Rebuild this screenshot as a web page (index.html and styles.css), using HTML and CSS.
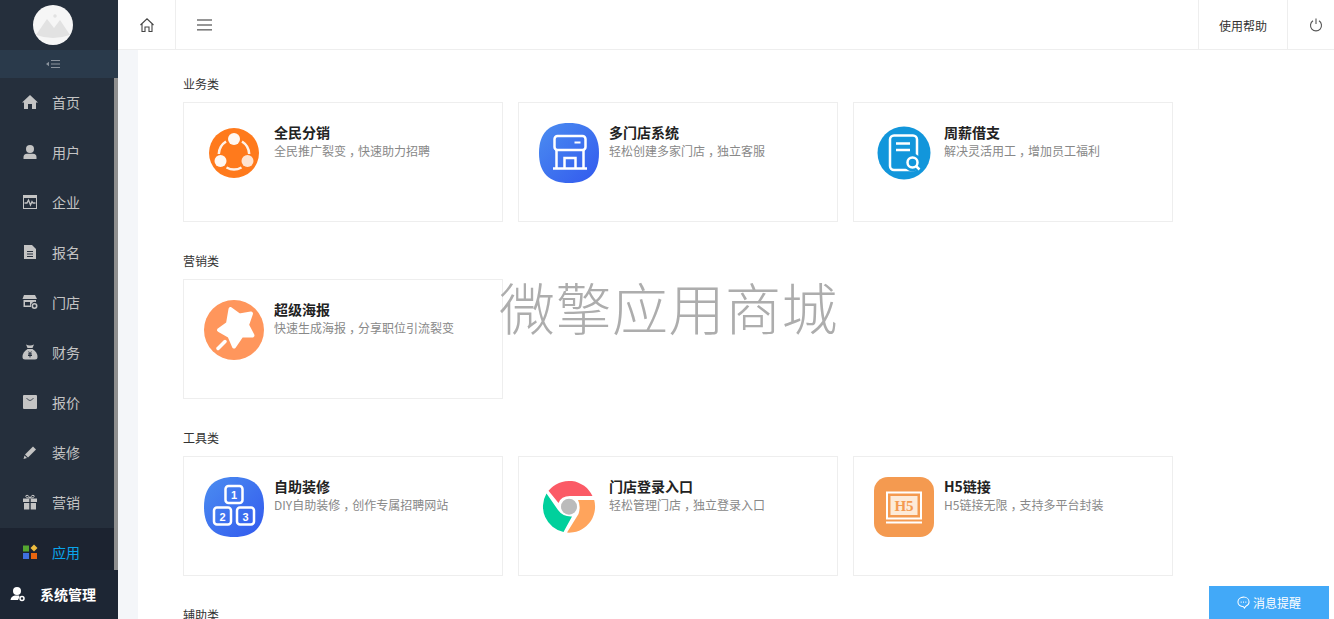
FILE: index.html
```html
<!DOCTYPE html>
<html lang="zh-CN">
<head>
    <meta charset="UTF-8">
    <title>应用</title>
    <link rel="stylesheet" href="styles.css">
</head>
<body>
    <!-- Sidebar -->
    <aside class="sidebar">
        <div class="logo">
            <svg width="40" height="40" viewBox="0 0 40 40">
                <circle cx="20" cy="20" r="20" fill="#f6f6f6"/>
                <path d="M3 30 L14 14 L21 23 L27 15 L37 30 Q20 36 3 30Z" fill="#e2e2e2"/>
                <circle cx="22" cy="11" r="1.8" fill="#e2e2e2"/>
            </svg>
        </div>
        <div class="toggle">
            <svg width="14" height="10" viewBox="0 0 14 10" fill="#8b939d">
                <path d="M0 5 L3 2.8 V7.2Z"/>
                <rect x="5" y="1" width="9" height="1"/><rect x="5" y="4.500" width="9" height="1"/><rect x="5" y="8" width="9" height="1"/>
            </svg>
        </div>
        <nav class="menu">
            <a class="menu-item">
                <svg class="menu-icon" viewBox="0 0 16 16"><path d="M8 1 L16 8.500 H14 V15 H10 V10 H6 V15 H2 V8.500 H0Z"/></svg>
                <span>首页</span>
            </a>
            <a class="menu-item">
                <svg class="menu-icon" viewBox="0 0 16 16"><circle cx="8" cy="5" r="4"/><path d="M1.500 15 V13 Q1.500 10 5 9.700 H11 Q14.500 10 14.500 13 V15Z"/></svg>
                <span>用户</span>
            </a>
            <a class="menu-item">
                <svg class="menu-icon" viewBox="0 0 16 16"><path fill-rule="evenodd" d="M1 1 H15 V15 H1Z M2 4 V14 H14 V4Z"/><path d="M2.500 9 L5 9 L6.500 6 L8.500 11 L10 7.500 L11 9 L13.500 9" fill="none" stroke="#c4c4c4" stroke-width="1.300"/></svg>
                <span>企业</span>
            </a>
            <a class="menu-item">
                <svg class="menu-icon" viewBox="0 0 16 16"><path fill-rule="evenodd" d="M2 1 H10 L14 5 V15 H2Z M5 7 V8 H11 V7Z M5 9.500 V10.500 H11 V9.500Z M5 12 V13 H11 V12Z"/></svg>
                <span>报名</span>
            </a>
            <a class="menu-item">
                <svg class="menu-icon" viewBox="0 0 16 16"><path d="M2 1 H13 L15 5 H0.500Z"/><path d="M1.500 6 H14 V8 A4 4 0 0 0 9 13 H1.500Z M3 8 V11.500 H8 V8Z" fill-rule="evenodd"/><circle cx="12.500" cy="12" r="2.200" fill="none" stroke="#c4c4c4" stroke-width="1.600"/></svg>
                <span>门店</span>
            </a>
            <a class="menu-item">
                <svg class="menu-icon" viewBox="0 0 16 16"><path d="M4 0.500 Q8 2.500 12 0.500 L10.500 4 H5.500Z"/><path fill-rule="evenodd" d="M5.500 5 H10.500 Q15.500 8 15.500 13 Q15.500 15.500 13 15.500 H3 Q0.500 15.500 0.500 13 Q0.500 8 5.500 5Z M6 7.500 L7.500 9.500 H6 V10.500 H7.500 V11 H6 V12 H7.500 V13.500 H8.500 V12 H10 V11 H8.500 V10.500 H10 V9.500 H8.500 L10 7.500 H9 L8 9 L7 7.500Z"/></svg>
                <span>财务</span>
            </a>
            <a class="menu-item">
                <svg class="menu-icon" viewBox="0 0 16 16"><rect x="1" y="1" width="14" height="14" rx="1"/><path d="M4.500 4 Q8 9 11.500 4" fill="none" stroke="#252f3c" stroke-width=".8"/></svg>
                <span>报价</span>
            </a>
            <a class="menu-item">
                <svg class="menu-icon" viewBox="0 0 16 16"><path d="M11 2.500 L14 5.500 L6 13.500 L3 10.500Z"/><path d="M2.500 11.500 L5 14 L1.500 15Z"/></svg>
                <span>装修</span>
            </a>
            <a class="menu-item">
                <svg class="menu-icon" viewBox="0 0 16 16"><path d="M1 4.500 H7.300 V8 H1Z M8.700 4.500 H15 V8 H8.700Z M2 9 H7.300 V15.500 H2Z M8.700 9 H14 V15.500 H8.700Z"/><path d="M8 4 Q3 4 4 1.500 Q6 0 8 4 Q10 0 12 1.500 Q13 4 8 4Z" fill="none" stroke="#c4c4c4"/></svg>
                <span>营销</span>
            </a>
            <a class="menu-item active">
                <svg class="menu-icon" viewBox="0 0 16 16">
                    <rect x="1" y="1.500" width="6" height="6" fill="#55a630"/>
                    <path d="M12 0.500 L15.500 4 L12 7.500 L8.500 4Z" fill="#efbd3f"/>
                    <rect x="1" y="9" width="6" height="6" fill="#3f6fe0"/>
                    <rect x="9" y="9" width="6" height="6" fill="#e8650f"/>
                </svg>
                <span>应用</span>
            </a>
        </nav>
        <div class="system">
            <svg class="system-icon" viewBox="0 0 16 16" fill="#fff"><circle cx="7" cy="5" r="4"/><path d="M0.500 14 Q1 10 5 9.500 H9 L9.500 11 L8 14Z"/><circle cx="12" cy="12.500" r="2" fill="none" stroke="#fff" stroke-width="1.500"/></svg>
            <span>系统管理</span>
        </div>
    </aside>

    <div class="main">
        <!-- Top bar -->
        <header class="topbar">
            <div class="top-cell home">
                <svg width="16" height="16" viewBox="0 0 16 16" fill="none" stroke="#444" stroke-width="1.100"><path d="M1.500 8 L8 1.800 L14.500 8 M3 6.800 V14.500 H6 V10 H10 V14.500 H13 V6.800"/></svg>
            </div>
            <div class="top-cell burger">
                <svg width="16" height="12" viewBox="0 0 16 12" fill="#7d7d7d"><rect y="0.200" width="15" height="1.600"/><rect y="5.200" width="15" height="1.600"/><rect y="10" width="15" height="1.600"/></svg>
            </div>
            <div class="top-cell help">使用帮助</div>
            <div class="top-cell power">
                <svg width="14" height="14" viewBox="0 0 14 14" fill="none" stroke="#555" stroke-width="1.100"><path d="M4 2.800 A5.500 5.500 0 1 0 10 2.800"/><path d="M7 0.500 V6"/></svg>
            </div>
        </header>

        <div class="page">
            <div class="content">
                <section class="group">
                    <h4 class="group-title">业务类</h4>
                    <div class="cards">
                        <div class="card">
                            <svg class="card-icon" viewBox="0 0 60 60">
                                <circle cx="30" cy="30" r="25" fill="#ff7a1c"/>
                                <g fill="none" stroke="#fff" stroke-width="2.500" opacity=".9">
                                    <path d="M22 18.500 A15.500 15.500 0 0 0 14.800 31"/>
                                    <path d="M38 18.500 A15.500 15.500 0 0 1 45.200 31"/>
                                    <path d="M22.500 44.500 A15.500 15.500 0 0 0 37.500 44.500"/>
                                </g>
                                <circle cx="30" cy="16" r="6" fill="#fff" opacity=".95"/>
                                <circle cx="16.500" cy="38" r="6" fill="#fff" opacity=".95"/>
                                <circle cx="43.500" cy="38" r="6" fill="#fff" opacity=".8"/>
                            </svg>
                            <div class="card-text">
                                <div class="card-title">全民分销</div>
                                <div class="card-desc">全民推广裂变<span class="comma" lang="zh-TW">，</span>快速助力招聘</div>
                            </div>
                        </div>
                        <div class="card">
                            <svg class="card-icon" viewBox="0 0 60 60">
                                <defs>
                                    <linearGradient id="blue" x1="0" y1="0" x2="1" y2="1">
                                        <stop offset="0" stop-color="#4b8df0"/>
                                        <stop offset="1" stop-color="#3259ee"/>
                                    </linearGradient>
                                </defs>
                                <path d="M30 0 C50 0 60 10 60 30 C60 50 50 60 30 60 C10 60 0 50 0 30 C0 10 10 0 30 0Z" fill="url(#blue)"/>
                                <g fill="none" stroke="#fff" stroke-width="2.500">
                                    <rect x="15.500" y="13" width="31" height="14" rx="3"/>
                                    <path d="M17.500 27 V45 M44.500 27 V45 M14 45.500 H48"/>
                                    <path d="M25.500 45 V35 H36.500 V45"/>
                                </g>
                                <rect x="35.500" y="18.500" width="6" height="2" fill="#fff"/>
                            </svg>
                            <div class="card-text">
                                <div class="card-title">多门店系统</div>
                                <div class="card-desc">轻松创建多家门店<span class="comma" lang="zh-TW">，</span>独立客服</div>
                            </div>
                        </div>
                        <div class="card">
                            <svg class="card-icon" viewBox="0 0 60 60">
                                <circle cx="30" cy="30" r="26.500" fill="#1296db"/>
                                <rect x="16" y="12.500" width="27" height="34.500" rx="4" fill="none" stroke="#fff" stroke-width="2.500"/>
                                <path d="M22 20.500 H36 M22 27 H36" stroke="#fff" stroke-width="2.500"/>
                                <circle cx="38.500" cy="39.500" r="9" fill="#1296db"/>
                                <circle cx="38.500" cy="39.500" r="5" fill="none" stroke="#fff" stroke-width="2.500"/>
                                <path d="M42.500 43.500 L45.500 46.500" stroke="#fff" stroke-width="2.500"/>
                            </svg>
                            <div class="card-text">
                                <div class="card-title">周薪借支</div>
                                <div class="card-desc">解决灵活用工<span class="comma" lang="zh-TW">，</span>增加员工福利</div>
                            </div>
                        </div>
                    </div>
                </section>

                <section class="group">
                    <h4 class="group-title">营销类</h4>
                    <div class="cards">
                        <div class="card">
                            <svg class="card-icon" viewBox="0 0 60 60">
                                <circle cx="30" cy="30" r="30" fill="#ff965c"/>
                                <path d="M26.500 9 L35.500 15.500 L47 13.500 L43 25 L48.500 35.500 L37.500 35.500 L30 46.500 L25.500 36 L15 30 L24 23.500Z" fill="#fff" stroke="#fff" stroke-width="4" stroke-linejoin="round"/>
                                <path d="M14 48.500 L21 41.500" stroke="#fff" stroke-width="3.500" stroke-linecap="round"/>
                            </svg>
                            <div class="card-text">
                                <div class="card-title">超级海报</div>
                                <div class="card-desc">快速生成海报<span class="comma" lang="zh-TW">，</span>分享职位引流裂变</div>
                            </div>
                        </div>
                    </div>
                </section>

                <section class="group">
                    <h4 class="group-title">工具类</h4>
                    <div class="cards">
                        <div class="card">
                            <svg class="card-icon" viewBox="0 0 60 60">
                                <path d="M30 0 C50 0 60 10 60 30 C60 50 50 60 30 60 C10 60 0 50 0 30 C0 10 10 0 30 0Z" fill="url(#blue)"/>
                                <g fill="none" stroke="#fff" stroke-width="2.500">
                                    <rect x="21.500" y="9" width="17" height="17" rx="3"/>
                                    <rect x="10" y="30.500" width="17" height="17" rx="3"/>
                                    <rect x="33" y="30.500" width="17" height="17" rx="3"/>
                                </g>
                                <g class="key-num">
                                    <text x="30" y="22">1</text>
                                    <text x="18.500" y="43.500">2</text>
                                    <text x="41.500" y="43.500">3</text>
                                </g>
                            </svg>
                            <div class="card-text">
                                <div class="card-title">自助装修</div>
                                <div class="card-desc">DIY自助装修<span class="comma" lang="zh-TW">，</span>创作专属招聘网站</div>
                            </div>
                        </div>
                        <div class="card">
                            <svg class="card-icon" viewBox="0 0 60 60">
                                <path d="M9.500 13.800 A26 26 0 0 1 53.500 19 H31 Q22 19 19.500 26Z" fill="#fb5a66"/>
                                <path d="M55.200 23 A26 26 0 0 1 28 55.600 L39.500 37 Q42 29 39 23Z" fill="#ffa45c"/>
                                <path d="M7.500 16.500 L19 33 Q24 40 33 39.500 L24.500 55 A26 26 0 0 1 7.500 16.500Z" fill="#00d09c"/>
                                <circle cx="30" cy="29.700" r="8" fill="#bbb"/>
                            </svg>
                            <div class="card-text">
                                <div class="card-title">门店登录入口</div>
                                <div class="card-desc">轻松管理门店<span class="comma" lang="zh-TW">，</span>独立登录入口</div>
                            </div>
                        </div>
                        <div class="card">
                            <svg class="card-icon" viewBox="0 0 60 60">
                                <rect width="60" height="60" rx="14" fill="#f49a50"/>
                                <rect x="13" y="15.500" width="34" height="26" fill="none" stroke="#fff" stroke-width="2"/>
                                <rect x="16.500" y="19" width="27" height="19" fill="#fdebd9"/>
                                <text class="h5-mark" x="30" y="34">H5</text>
                                <path d="M12 45.500 H48" stroke="#fff" stroke-width="2"/>
                            </svg>
                            <div class="card-text">
                                <div class="card-title">H5链接</div>
                                <div class="card-desc">H5链接无限<span class="comma" lang="zh-TW">，</span>支持多平台封装</div>
                            </div>
                        </div>
                    </div>
                </section>

                <section class="group">
                    <h4 class="group-title">辅助类</h4>
                </section>
            </div>
        </div>
    </div>

    <div class="watermark">微擎应用商城</div>

    <a class="notice">
        <svg width="13" height="13" viewBox="0 0 14 14" fill="none" stroke="#fff" stroke-width="1.100"><path d="M7 1.200 C3.500 1.200 1 3.500 1 6.500 C1 9.500 3.500 11.500 7 11.500 L8 13 L9.500 11 C11.500 10.200 13 8.500 13 6.500 C13 3.500 10.500 1.200 7 1.200Z"/><path d="M4 6.500 H5 M6.500 6.500 H7.500 M9 6.500 H10" stroke-width="1.300"/></svg>
        消息提醒
    </a>
</body>
</html>
```

FILE: styles.css
```css
* {
    box-sizing: border-box;
}

html, body {
    height: 100%;
}

/* Body Styling */
body {
    margin: 0;
    display: flex;
    overflow: hidden;
    background-color: #fff;
    color: #333;
    font-family: "Noto Sans CJK SC", "Liberation Sans", sans-serif;
    font-size: 12px;
}

/* Sidebar */
.sidebar {
    width: 118px;
    flex-shrink: 0;
    display: flex;
    flex-direction: column;
    background-color: #252f3c;
}

.logo {
    height: 50px;
    display: flex;
    justify-content: center;
    align-items: center;
    padding-right: 12px;
}

.toggle {
    height: 28px;
    display: flex;
    justify-content: center;
    align-items: center;
    padding-right: 12px;
    background-color: #2a3a4b;
}

.menu {
    flex: 1;
    min-height: 0;
    overflow: hidden;
    border-right: 4px solid #8f8f8f;
}

.menu-item {
    height: 50px;
    display: flex;
    align-items: center;
    gap: 14px;
    padding: 0 0 2px 22px;
    color: #c4c4c4;
    font-size: 14px;
}

.menu-item.active {
    background-color: #1c2330;
    color: #0aa5ec;
}

.menu-icon {
    width: 16px;
    height: 16px;
    fill: #c4c4c4;
}

.system {
    height: 49px;
    display: flex;
    align-items: center;
    gap: 14px;
    padding: 0 0 2px 10px;
    background-color: #1d2634;
    color: #fff;
    font-size: 14px;
    font-weight: bold;
}

.system-icon {
    width: 16px;
    height: 16px;
}

/* Top bar */
.main {
    flex: 1;
    min-width: 0;
    display: flex;
    flex-direction: column;
}

.topbar {
    height: 50px;
    flex-shrink: 0;
    display: flex;
    border-bottom: 1px solid #eee;
}

.top-cell {
    display: flex;
    justify-content: center;
    align-items: center;
}

.home {
    width: 58px;
    border-right: 1px solid #eee;
}

.burger {
    width: 58px;
    margin-right: auto;
}

.help {
    width: 90px;
    padding-top: 2px;
    border-left: 1px solid #eee;
    border-right: 1px solid #eee;
    color: #333;
}

.power {
    width: 46px;
    padding-left: 10px;
}

/* Content */
.page {
    flex: 1;
    min-height: 0;
    overflow: hidden;
    padding-left: 20px;
    background-color: #f4f6f9;
}

.content {
    height: 100%;
    padding: 25px 0 0 45px;
    background-color: #fff;
}

.group {
    margin-bottom: 30px;
}

.group-title {
    margin: 0 0 10px;
    font-size: 12px;
    font-weight: normal;
    line-height: 17px;
    color: #333;
}

.cards {
    display: flex;
    gap: 15px;
}

.card {
    width: 320px;
    height: 120px;
    display: flex;
    align-items: flex-start;
    gap: 10px;
    padding: 20px;
    border: 1px solid #eee;
}

.card-icon {
    width: 60px;
    height: 60px;
    flex-shrink: 0;
}

.card-title {
    margin: -1px 0 1px;
    font-size: 14px;
    font-weight: bold;
    line-height: 20px;
    color: #222;
}

.card-desc {
    font-size: 12px;
    line-height: 16px;
    color: #888;
}

/* The comma sits low and in the middle of its cell in the original */
.comma {
    font-family: "Noto Sans CJK TC", sans-serif;
    vertical-align: -4px;
}

.key-num text {
    fill: #fff;
    font-size: 11px;
    font-weight: bold;
    text-anchor: middle;
    font-family: "Liberation Sans", sans-serif;
}

.h5-mark {
    fill: #f49a50;
    font-size: 15px;
    font-weight: bold;
    text-anchor: middle;
    font-family: "Liberation Serif", serif;
}

/* Overlay text */
.watermark {
    position: fixed;
    top: 268px;
    left: 499px;
    font-size: 56px;
    line-height: 76px;
    letter-spacing: 0.500px;
    color: #adadad;
    font-weight: 300;
    white-space: nowrap;
}

/* Floating notice button */
.notice {
    position: fixed;
    right: 5px;
    bottom: 0;
    width: 120px;
    height: 33px;
    display: flex;
    justify-content: center;
    align-items: center;
    gap: 3px;
    background-color: #42a9f8;
    color: #fff;
    font-size: 12px;
}
```
